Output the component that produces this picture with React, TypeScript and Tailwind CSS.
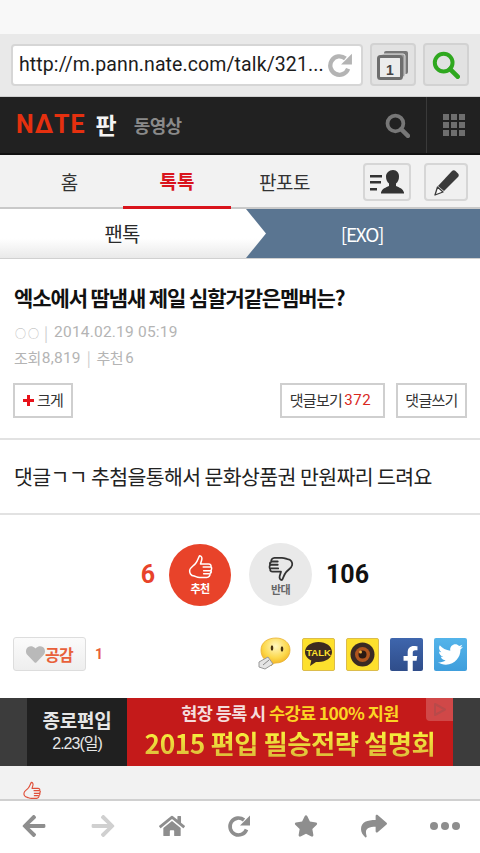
import React from "react";
import { FaArrowLeft, FaArrowRight, FaHome, FaStar, FaShare, FaHeart, FaFacebookF, FaTwitter } from "react-icons/fa";

const KR = "font-['Noto_Sans_CJK_KR','Noto_Sans',sans-serif]";

function Redo({ size, color, stroke = 3.4 }: { size: number; color: string; stroke?: number }) {
  return (
    <svg width={size} height={size} viewBox="0 0 24 24" fill="none">
      <path d="M19.5 15.5A8.5 8.5 0 1 1 17 6" stroke={color} strokeWidth={stroke} />
      <path d="M23 1.5V11.5H13Z" fill={color} />
    </svg>
  );
}

function Mag({ size, color, stroke = 3 }: { size: number; color: string; stroke?: number }) {
  return (
    <svg width={size} height={size} viewBox="0 0 24 24" fill="none">
      <circle cx="10" cy="10" r="7.6" stroke={color} strokeWidth={stroke} />
      <path d="M15.5 15.5L22 22" stroke={color} strokeWidth={stroke + 0.6} strokeLinecap="round" />
    </svg>
  );
}

function ThumbUp({ color, size }: { color: string; size: number }) {
  return (
    <svg width={size} height={size} viewBox="0 0 28 30" fill="none" stroke={color} strokeWidth="1.7" strokeLinejoin="round" strokeLinecap="round">
      <path d="M13 2c2 0 3 2 2.400 4.500L14 11h9c2 0 3 1.400 2.600 3 1 1 1 3 0 4 .6 1.400 0 3-1 3.600.2 2.400-1.300 4.400-3.600 4.400H13c-3 0-4-1-6-1.500C3 24 1.500 21 2 18c.5-3 4-4.500 6.500-7.500C11 7.500 11.500 4 13 2Z" />
      <path d="M17 14.500h8M17.500 18.500h8M17.500 22h6" />
    </svg>
  );
}

function ThumbDown() {
  return (
    <svg width="26" height="28" viewBox="0 0 28 30" fill="none" stroke="#333" strokeWidth="1.9" strokeLinejoin="round" strokeLinecap="round">
      <g transform="rotate(180 14 15)">
        <path d="M13 2c2 0 3 2 2.400 4.500L14 11h9c2 0 3 1.400 2.600 3 1 1 1 3 0 4 .6 1.400 0 3-1 3.600.2 2.400-1.300 4.400-3.600 4.400H13c-3 0-4-1-6-1.500C3 24 1.500 21 2 18c.5-3 4-4.500 6.500-7.500C11 7.500 11.500 4 13 2Z" />
        <path d="M17 14.500h8M17.500 18.500h8M17.500 22h6" />
      </g>
    </svg>
  );
}

function UrlBar() {
  return (
    <div className="h-[63px] bg-[#e9e9e9] flex items-center pl-[11px] pb-[1px] border-b border-[#cfcfcf]">
      <div className="shrink-0 w-[352px] h-[42px] bg-white border-2 border-[#d6d6d6] rounded-[4px] flex items-center pl-[6px] pr-[8px] justify-between">
        <span className="font-['Roboto',sans-serif] text-[19.5px] text-[#1c1c1c] whitespace-nowrap tracking-[0.1px]">http://m.pann.nate.com/talk/321...</span>
        <Redo size={26} color="#b4b4b4" stroke={4} />
      </div>
      <div className="shrink-0 ml-[7px] w-[46px] h-[43px] rounded-[4px] bg-[#e2e2e2] border-2 border-[#d2d2d2] flex items-center justify-center">
        <svg width="32" height="30" viewBox="0 0 32 30">
          <rect x="7" y="1" width="24" height="23" rx="2" fill="#777" />
          <rect x="4" y="4" width="24" height="23" rx="2" fill="#9a9a9a" stroke="#e2e2e2" strokeWidth="1" />
          <rect x="1.500" y="6.500" width="23" height="22" rx="2" fill="#ececec" stroke="#6e6e6e" strokeWidth="3" />
          <text x="13" y="25" textAnchor="middle" fontSize="14" fontWeight="700" fontFamily="Liberation Sans" fill="#444">1</text>
        </svg>
      </div>
      <div className="shrink-0 ml-[7px] w-[46px] h-[43px] rounded-[4px] bg-[#e2e2e2] border-2 border-[#d2d2d2] flex items-center justify-center">
        <Mag size={28} color="#2fa81f" stroke={3.4} />
      </div>
    </div>
  );
}

function NateHeader() {
  return (
    <div className="h-[58px] bg-[#212121] border-b-2 border-[#111] flex items-center">
      <div className="flex-1 flex items-center pl-[16px] pb-[1px]">
        <span className="font-['Roboto',sans-serif] font-bold text-[25px] leading-none tracking-[1px] text-[#e5300f]">NΔTE</span>
        <span className={`${KR} ml-[10px] font-bold text-[23px] leading-none text-[#f4f4f4]`}>판</span>
        <span className={`${KR} ml-[17px] font-bold text-[18px] leading-none text-[#8a8a8a] tracking-[-0.6px]`}>동영상</span>
      </div>
      <div className="w-[55px] flex items-center justify-center pr-[3px]">
        <Mag size={25} color="#777" stroke={3.6} />
      </div>
      <div className="w-[54px] h-full border-l border-[#3a3a3a] flex items-center justify-center">
        <div className="grid grid-cols-3 gap-[2px]">
          {Array.from({ length: 9 }).map((_, i) => (
            <div key={i} className="w-[6px] h-[6px] bg-[#6e6e6e]" />
          ))}
        </div>
      </div>
    </div>
  );
}

function Tabs() {
  return (
    <div className={`${KR} h-[54px] bg-[#f2f2f2] border-b-[2px] border-[#c9c9c9] flex pl-[16px] text-[19px]`}>
      <div className="w-[107px] flex items-center justify-center pt-[2px] text-[#333]">홈</div>
      <div className="w-[108px] flex items-center justify-center pt-[2px] font-bold text-[#d9141c] border-b-[3px] border-[#d9141c] mb-[-2px]">톡톡</div>
      <div className="w-[107px] flex items-center justify-center pt-[2px] text-[#333] tracking-[-0.5px]">판포토</div>
      <div className="ml-[25px] mt-[8px] w-[48px] h-[38px] border-2 border-[#d6d6d6] rounded-[4px] bg-[#f0f0f0] flex items-center justify-center">
        <svg width="36" height="26" viewBox="0 0 36 26">
          <path d="M1 6h12v2.500H1zM1 12h11v2.500H1zM1 19h7v2.500H1z" fill="#333" />
          <path d="M24 1c4 0 6 3 6 6.500 0 3-1 5.500-3 7v2.500c3 1.500 7 2.500 8 6.500v1H12v-1c1-4 5-5 8-6.500V14.500c-2-1.500-3-4-3-7C17 4 20 1 24 1Z" fill="#333" />
        </svg>
      </div>
      <div className="ml-[13px] mt-[8px] w-[44px] h-[38px] border-2 border-[#d6d6d6] rounded-[4px] bg-[#f0f0f0] flex items-center justify-center">
        <svg width="27" height="27" viewBox="0 0 27 27">
          <path d="M19 2c1-1 2.500-1 3.500 0l2.500 2.500c1 1 1 2.500 0 3.500L11 22 5 17Z" fill="#3a3a3a" />
          <path d="M4.500 18l5.500 5L2 26Z" fill="#fafafa" stroke="#3a3a3a" strokeWidth="1.300" strokeLinejoin="round" />
        </svg>
      </div>
    </div>
  );
}

function Crumb() {
  return (
    <div className={`${KR} h-[50px] bg-[#5a7591] relative border-b border-[#d0d0d0] flex`}>
      <div className="w-[244px] flex items-center justify-center text-[20px] text-[#2a2a2a] tracking-[-1px] relative z-10 pt-[1px]">팬톡</div>
      <div className="flex-1 flex items-center justify-center text-[19px] text-white tracking-[-1.2px] pt-[1px]">[EXO]</div>
      <div className="absolute inset-0 bg-gradient-to-b from-white from-60% to-[#e9e9e9] [clip-path:polygon(0_0,246px_0,266px_50%,246px_100%,0_100%)]" />
    </div>
  );
}

function Post() {
  return (
    <div className={`${KR} bg-white`}>
      <div className="h-[181px] border-b-2 border-[#e2e2e2] pl-[14px] pr-[13px]">
        <h1 className="pt-[21px] text-[21px] leading-[34px] font-bold text-[#111] tracking-[-1.1px] whitespace-nowrap">엑소에서 땀냄새 제일 심할거같은멤버는?</h1>
        <div className="mt-[6px] h-[26px] flex items-center text-[15px] text-[#b4b4b4] whitespace-nowrap">
          <span className="font-['Noto_Sans_CJK_KR',sans-serif] text-[11px] leading-none w-[29px] tracking-[2px] pl-[1px]">○○</span>
          <span className="ml-[1px] text-[#ccc]">|</span>
          <span className="ml-[6px] font-['Roboto',sans-serif] text-[15.5px] tracking-[0.2px]">2014.02.19 05:19</span>
        </div>
        <div className="h-[25px] flex items-center text-[15px] text-[#b4b4b4] whitespace-nowrap tracking-[-0.4px]">
          조회<span className="ml-[1px] font-['Roboto',sans-serif] text-[15.5px] tracking-[0.2px]">8,819</span>
          <span className="ml-[6px] mr-[6px] text-[#ccc]">|</span>추천<span className="ml-[2px] font-['Roboto',sans-serif]">6</span>
        </div>
        <div className="mt-[12px] ml-[-1px] flex justify-between text-[15px] text-[#333] tracking-[-0.7px]">
          <button className="w-[60px] h-[35px] border-2 border-[#cfcfcf] flex items-center justify-center gap-[3px]">
            <svg width="11" height="11" viewBox="0 0 11 11"><path d="M4 0h3v4h4v3H7v4H4V7H0V4h4z" fill="#e8121a" /></svg>
            크게
          </button>
          <div className="flex gap-[11px]">
            <button className="w-[105px] h-[35px] border-2 border-[#cfcfcf] flex items-center justify-center pr-[4px]">
              댓글보기<span className="ml-[2px] font-['Roboto',sans-serif] text-[#d9281e] tracking-[0.6px]">372</span>
            </button>
            <button className="w-[71px] h-[35px] border-2 border-[#cfcfcf] flex items-center justify-center">댓글쓰기</button>
          </div>
        </div>
      </div>
      <div className="h-[75px] border-b-2 border-[#e2e2e2] pl-[14px] flex items-center text-[20.5px] text-[#222] tracking-[-0.6px] whitespace-nowrap">
        댓글ㄱㄱ 추첨을통해서 문화상품권 만원짜리 드려요
      </div>
      <div className="h-[119px] flex items-center">
        <span className="w-[155px] text-right font-['Roboto',sans-serif] font-bold text-[25px] text-[#e8432a]">6</span>
        <div className="ml-[14px] w-[62px] h-[62px] rounded-full bg-[#e8432a] flex flex-col items-center justify-center text-white">
          <ThumbUp color="#fff" size={27} />
          <span className="text-[11px] leading-[14px] font-bold tracking-[-0.5px]">추천</span>
        </div>
        <div className="ml-[18px] w-[63px] h-[63px] rounded-full bg-[#e9e9e9] flex flex-col items-center justify-center text-[#666]">
          <ThumbDown />
          <span className="text-[11px] leading-[14px] font-bold tracking-[-0.5px]">반대</span>
        </div>
        <span className="ml-[14px] font-['Roboto',sans-serif] font-bold text-[25px] text-[#111]">106</span>
      </div>
      <div className="h-[64px] pl-[13px] pr-[13px] pt-[3px] flex items-start justify-between">
        <div className="flex items-center">
          <button className="w-[73px] h-[34px] rounded-[3px] border border-[#ddd] bg-gradient-to-b from-[#fbfbfb] to-[#eeeeee] flex items-center justify-center text-[16px] font-bold text-[#e8603a] tracking-[-0.8px]">
            <FaHeart size={19} color="#b9b9b9" />
            공감
          </button>
          <span className="ml-[9px] font-['Roboto',sans-serif] font-bold text-[14px] text-[#e8603a]">1</span>
        </div>
        <div className="flex items-center gap-[11px]">
          <svg width="33" height="34" viewBox="0 0 33 34">
            <defs>
              <radialGradient id="f" cx="50%" cy="30%" r="70%"><stop offset="0" stopColor="#fff7c0" /><stop offset="0.6" stopColor="#fcd84a" /><stop offset="1" stopColor="#f0a818" /></radialGradient>
            </defs>
            <path d="M3 13C3 5 10 1 18 1s14 5 14 12-6 13-14 13c-2 0-3 1-5 3l-1-4C7 24 3 20 3 13Z" fill="url(#f)" stroke="#e8b030" strokeWidth="0.8" />
            <ellipse cx="14" cy="11" rx="1.300" ry="2.800" fill="#4a3410" />
            <ellipse cx="24" cy="12" rx="1.300" ry="2.800" fill="#4a3410" />
            <path d="M1 25l9-5 5 7-8 5-6-2z" fill="#e4e4e4" stroke="#999" strokeWidth="1" />
            <path d="M5 28l6-5" stroke="#888" strokeWidth="1" />
          </svg>
          <div className="w-[33px] h-[33px] rounded-[2px] bg-[#fde02d] border border-[#dcbc4c] flex items-center justify-center">
            <svg width="29" height="26" viewBox="0 0 29 26">
              <path d="M14.500 1C7 1 1 5.300 1 11c0 3.700 2.500 6.800 6.300 8.500L6 25l6-4c.8.100 1.600.100 2.500.100C22 21 28 16.700 28 11S22 1 14.500 1Z" fill="#3d2a20" />
              <text x="14.500" y="14.500" textAnchor="middle" fontSize="9.500" fontWeight="700" fontFamily="Liberation Sans" fill="#fde02d">TALK</text>
            </svg>
          </div>
          <div className="w-[33px] h-[33px] rounded-[2px] bg-[#fde02d] border border-[#dcbc4c] flex items-center justify-center">
            <svg width="25" height="25" viewBox="0 0 25 25">
              <circle cx="12.500" cy="12.500" r="12" fill="#3a2a24" />
              <circle cx="12.500" cy="12.500" r="7.500" fill="#b0551e" />
              <circle cx="12.500" cy="12.500" r="4" fill="#2a1a14" />
              <circle cx="10.500" cy="10" r="1.500" fill="#f0b040" />
            </svg>
          </div>
          <div className="w-[33px] h-[33px] rounded-[2px] bg-gradient-to-b from-[#3f66ad] to-[#2f4d8a] flex items-end justify-center overflow-hidden pl-[8px]">
            <FaFacebookF size={26} color="#fff" className="-mb-[1px]" />
          </div>
          <div className="w-[33px] h-[33px] rounded-[2px] bg-gradient-to-b from-[#54b4ea] to-[#3f9edc] flex items-center justify-center">
            <FaTwitter size={25} color="#fff" />
          </div>
        </div>
      </div>
    </div>
  );
}

function Ad() {
  return (
    <div className={`${KR} h-[68px] bg-[#3c3c3c] flex justify-center overflow-hidden`}>
      <div className="w-[100px] bg-[#202020] flex flex-col items-center justify-center text-[#e6e6e6] font-['Liberation_Sans','Noto_Sans_CJK_KR',sans-serif]">
        <div className="text-[19px] leading-[24px] font-bold tracking-[-0.2px]">종로편입</div>
        <div className="text-[16px] leading-[20px] tracking-[-1px]">2.23(일)</div>
      </div>
      <div className="w-[326px] bg-[#c41a1a] relative flex flex-col items-center pt-[3px]">
        <div className="text-[17.5px] leading-[24px] font-bold text-[#f4dcdc] tracking-[-0.6px] whitespace-nowrap">
          현장 등록 시 <span className="text-[#fbd524]">수강료 100% 지원</span>
        </div>
        <div className="text-[26.4px] leading-[36px] font-bold tracking-[-0.5px] whitespace-nowrap bg-gradient-to-b from-[#ffff3c] to-[#d9b43a] bg-clip-text text-transparent">
          2015 편입 필승전략 설명회
        </div>
        <div className="absolute right-0 top-0 w-[27px] h-[23px] bg-[#d04848] rounded-bl-[4px] flex items-center justify-center">
          <svg width="14" height="15" viewBox="0 0 14 15"><path d="M2 2l10 5.500L2 13Z" fill="none" stroke="#b84a4a" strokeWidth="2" strokeLinejoin="round" /></svg>
        </div>
      </div>
    </div>
  );
}

function BottomBar() {
  const c = "#8e8e8e";
  return (
    <div className="h-[54px] bg-white border-t-2 border-[#d0d0d0] flex items-center justify-between pl-[21px] pr-[20px] pb-[3px]">
      <FaArrowLeft size={26} color={c} />
      <FaArrowRight size={26} color="#d0d0d0" />
      <FaHome size={26} color={c} />
      <Redo size={24} color={c} stroke={3.6} />
      <FaStar size={24} color={c} />
      <FaShare size={26} color={c} />
      <div className="flex gap-[3px]">
        <div className="w-[8px] h-[8px] rounded-full bg-[#8e8e8e]" />
        <div className="w-[8px] h-[8px] rounded-full bg-[#8e8e8e]" />
        <div className="w-[8px] h-[8px] rounded-full bg-[#8e8e8e]" />
      </div>
    </div>
  );
}

export default function App() {
  return (
    <div className="w-[480px] h-[853px] overflow-hidden flex flex-col bg-white">
      <div className="h-[34px] bg-[#f8f8f8]" />
      <UrlBar />
      <NateHeader />
      <Tabs />
      <Crumb />
      <Post />
      <Ad />
      <div className="h-[33px] bg-[#f2f2f2] pl-[22px] flex items-end overflow-hidden">
        <div className="-mb-[2px]"><ThumbUp color="#e0503a" size={20} /></div>
      </div>
      <BottomBar />
    </div>
  );
}
